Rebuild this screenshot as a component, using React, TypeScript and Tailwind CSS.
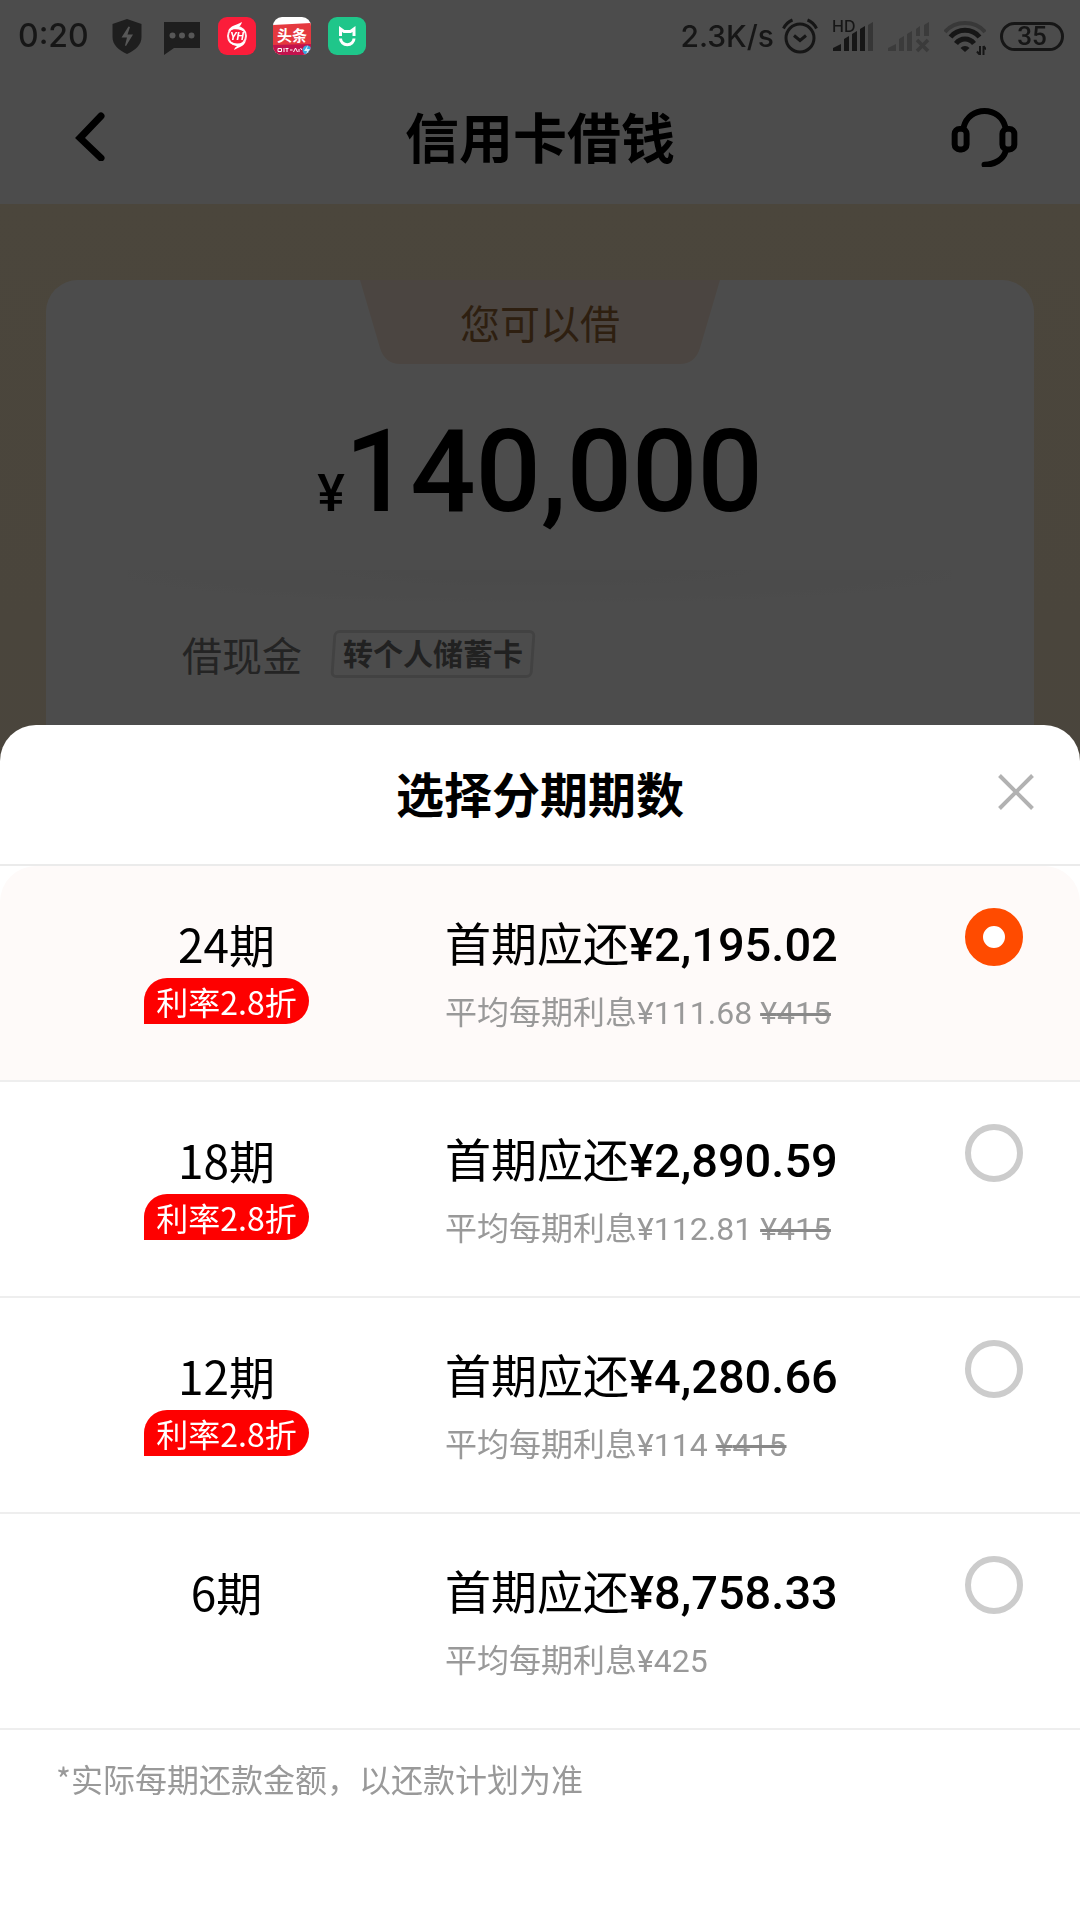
import { useState } from 'react'
import clsx from 'clsx'

type Plan = {
  periods: number
  discount?: string
  first: string
  interest: string
  original?: string
}

const PLANS: Plan[] = [
  { periods: 24, discount: '利率2.8折', first: '2,195.02', interest: '111.68', original: '415' },
  { periods: 18, discount: '利率2.8折', first: '2,890.59', interest: '112.81', original: '415' },
  { periods: 12, discount: '利率2.8折', first: '4,280.66', interest: '114', original: '415' },
  { periods: 6, first: '8,758.33', interest: '425' },
]

function ShieldIcon() {
  return (
    <svg viewBox="0 0 38 38" className="h-[38px] w-[38px]" aria-hidden="true">
      <path d="M19 2l14.500 5v13c0 8-6 13-14.500 17C10.500 33 4.500 28 4.500 20V7z" fill="#1e1e1e" />
      <path d="M20.500 9.500l-7 11h5.500l-2 8 1 .5 7-11.500h-5.500l2.500-7.500z" fill="#575757" />
    </svg>
  )
}

function MessageIcon() {
  return (
    <svg viewBox="0 0 38 38" className="h-[38px] w-[38px]" aria-hidden="true">
      <path d="M1 5h36v26H11l-10 7z" fill="#1e1e1e" />
      <circle cx="9.500" cy="18.500" r="3" fill="#575757" />
      <circle cx="19" cy="18.500" r="3" fill="#575757" />
      <circle cx="28.500" cy="18.500" r="3" fill="#575757" />
    </svg>
  )
}

function YhIcon() {
  return (
    <svg viewBox="0 0 38 38" className="h-[38px] w-[38px]" aria-hidden="true">
      <rect width="38" height="38" rx="9" fill="#fb1d3a" />
      <circle cx="19" cy="19" r="9" fill="none" stroke="#ffe9ec" strokeWidth="2" />
      <path d="M10 14c3-6 7-5 14-9-1 3-2 4-3 5 4 1 6 3 7 6-5-4-11-5-18-2z" fill="#fff" />
      <path d="M28 24c-3 6-5 5-12 9 1-3 2-3 3-4-4-1-8-3-9-6 5 4 11 5 18 1z" fill="#fff" />
      <text x="19" y="23" textAnchor="middle" fontSize="11" fontWeight="700" fontStyle="italic" fontFamily="Roboto, sans-serif" fill="#fff">
        YH
      </text>
    </svg>
  )
}

function ToutiaoIcon() {
  return (
    <svg viewBox="0 0 38 38" className="h-[38px] w-[38px]" aria-hidden="true">
      <defs>
        <clipPath id="toutiao">
          <rect width="38" height="38" rx="9" />
        </clipPath>
      </defs>
      <g clipPath="url(#toutiao)">
        <rect width="38" height="38" fill="#fff" />
        <path d="M0 8l38-2v32H0z" fill="#e5393f" />
        <path d="M0 28l38-1v11H0z" fill="#c2134d" />
        <text x="19" y="24" textAnchor="middle" fontSize="15" fontWeight="700" fontFamily="Noto Sans CJK SC, sans-serif" fill="#fff">
          头条
        </text>
        <path
          d="M5 31.500h3.500v3H5zM11 31v4M12.500 31.500h3M14 31v4M17 33h2.500M22.500 31l-2 4M22.500 31l2 4M26 32v3M27.500 31l1.500 2"
          stroke="#fff"
          strokeWidth="1"
          fill="none"
        />
        <circle cx="34" cy="33" r="4.500" fill="#39a9e0" />
        <path d="M35 28l-4 6h3l-1 4 4-6h-3z" fill="#d9f1fb" />
      </g>
    </svg>
  )
}

function MiHomeIcon() {
  return (
    <svg viewBox="0 0 38 38" className="h-[38px] w-[38px]" aria-hidden="true">
      <rect width="38" height="38" rx="9" fill="#1fc68a" />
      <path
        d="M12.500 19V12l3.500 2.500h6.500L26 12v7M12.500 21.500a6.500 6 0 0 0 13.500 0"
        fill="none"
        stroke="#fff"
        strokeWidth="3"
      />
    </svg>
  )
}

function AlarmIcon() {
  return (
    <svg viewBox="0 0 36 38" className="h-[38px] w-9" aria-hidden="true" fill="none" stroke="#161616" strokeWidth="3">
      <circle cx="18" cy="21" r="14" />
      <path d="M12 18.500l6 5 6-5M1.500 11.500c2-4 5-7 9-8.500M34.500 11.500c-2-4-5-7-9-8.500" />
    </svg>
  )
}

function SignalHdIcon() {
  return (
    <span className="relative block">
      <svg viewBox="0 0 42 38" className="h-[38px] w-[42px]" aria-hidden="true">
        <path d="M1 34v-3l8-4v7zM12 22l5-3v15h-5zM20 17l5-3v20h-5zM28 12l5-3v25h-5z" fill="#161616" />
        <path d="M36 8l5-3v29h-5z" fill="#363636" />
      </svg>
      <span className="absolute top-0 left-0 text-[16px] leading-[18px] font-medium">HD</span>
    </span>
  )
}

function SignalOffIcon() {
  return (
    <svg viewBox="0 0 42 38" className="h-[38px] w-[42px]" aria-hidden="true">
      <path d="M0 34v-3l8-4v7zM11 22l5-3v15h-5zM19 17l5-3v20h-5zM28 12l4-3v10h-4zM36 8l5-3v14h-5z" fill="#3b3b3b" />
      <path d="M29 23l11 11M40 23L29 34" stroke="#3b3b3b" strokeWidth="3.500" />
    </svg>
  )
}

function WifiIcon() {
  return (
    <svg viewBox="0 0 42 38" className="h-[38px] w-[42px]" aria-hidden="true" fill="none" strokeWidth="4">
      <path d="M1 15C11 3 31 3 41 15" stroke="#383838" />
      <path d="M6.500 20c7.500-9 21.500-9 29 0M12 26.500c4.500-6 13.500-6 18 0" stroke="#161616" strokeWidth="5" />
      <path d="M16.500 31a6 6 0 0 1 9 0l-4.500 4z" fill="#161616" />
      <path d="M36 29v9M39.500 29v9M33 34.500l3 3.500M39.500 29l2.500 3.500" stroke="#161616" strokeWidth="2" />
    </svg>
  )
}

function StatusBar() {
  return (
    <div className="fixed inset-x-0 top-0 z-20 flex h-[72px] items-center justify-between pr-4 pl-[18px] font-['Inter',sans-serif] text-[#161616]">
      <div className="flex items-center gap-[17px]">
        <span className="w-[73px] text-[32px] leading-9 font-medium">0:20</span>
        <ShieldIcon />
        <MessageIcon />
        <YhIcon />
        <ToutiaoIcon />
        <MiHomeIcon />
      </div>
      <div className="flex items-center gap-[14px]">
        <div className="flex items-center gap-2">
          <span className="text-[30px] leading-9 font-medium">2.3K/s</span>
          <AlarmIcon />
        </div>
        <SignalHdIcon />
        <SignalOffIcon />
        <WifiIcon />
        <span className="flex h-[29px] w-16 items-center justify-center rounded-full border-[3px] border-[#161616] font-['Roboto',sans-serif] text-[26px] leading-6 font-medium">
          35
        </span>
      </div>
    </div>
  )
}

function LoanPage() {
  return (
    <div className="flex min-h-screen flex-col bg-white">
      <header className="flex h-[204px] items-center justify-between px-[62px] pt-[68px]">
        <button type="button" aria-label="返回" className="flex w-[67px] justify-start pl-3">
          <svg viewBox="0 0 34 50" className="h-[50px] w-[34px]" fill="none" stroke="#000" strokeWidth="7" strokeLinecap="round">
            <path d="M27 5L6 27l21 20" />
          </svg>
        </button>
        <h1 className="text-[54px] leading-[72px] font-bold">信用卡借钱</h1>
        <button type="button" aria-label="客服" className="w-[67px]">
          <svg viewBox="91 48 202 184" className="h-[61px] w-[67px]" fill="none" stroke="#000" strokeWidth="18" strokeLinecap="round">
            <rect x="102" y="117" width="36" height="62" rx="15" />
            <rect x="246" y="117" width="36" height="62" rx="15" />
            <path d="M129 112c8-32 34-49 63-49s55 17 63 49M256 184c-8 26-34 41-64 41" />
          </svg>
        </button>
      </header>

      <main className="flex grow flex-col bg-linear-to-b from-[#fae9c8] to-[#f6e5d0] px-[46px] pt-[76px]">
        <section className="flex grow flex-col items-center rounded-t-[32px] bg-white">
          <div className="relative flex h-[84px] w-[360px] items-center justify-center">
            <svg viewBox="0 0 360 84" className="absolute inset-0 h-full w-full" aria-hidden="true">
              <path d="M0 0h360l-20 68q-5 16-20 16H40q-15 0-20-16z" fill="#fae8da" />
            </svg>
            <span className="relative text-[40px] leading-[60px] text-[#9a6a38]">您可以借</span>
          </div>
          <p className="mt-10 flex items-baseline font-['Roboto',sans-serif] leading-[136px] font-medium">
            <span className="text-[52px]">¥</span>
            <span className="text-[115px]">140,000</span>
          </p>
          <div className="mt-2 h-8 w-10/12 bg-radial-[at_50%_0%] from-[#f7f7f7] to-white" />
          <div className="mt-[22px] flex w-full items-center gap-[30px] pl-[136px]">
            <span className="text-[40px] leading-[60px] text-[#7a7a7a]">借现金</span>
            <span className="relative px-[11px]">
              <span className="absolute inset-0 -skew-x-4 rounded-md border-[3px] border-[#dedede]" />
              <span className="relative block pb-1 text-[30px] leading-[44px] font-bold text-[#707070]">转个人储蓄卡</span>
            </span>
          </div>
        </section>
      </main>
    </div>
  )
}

function PlanRow({ plan, checked, onSelect }: { plan: Plan; checked: boolean; onSelect: () => void }) {
  return (
    <label
      className={clsx(
        'flex h-[216px] cursor-pointer items-start border-b-2 border-[#eeeeee] pr-[57px] first-of-type:rounded-t-[36px]',
        checked ? 'bg-[#fefaf9]' : 'bg-white',
      )}
    >
      <span className="flex w-[43.5%] shrink-0 flex-col items-center pt-[42px] pl-2">
        <span className="text-[46px] leading-[70px]">{plan.periods}期</span>
        {plan.discount && (
          <span className="rounded-t-full rounded-br-full bg-[#fe0000] px-3 text-[32px] leading-[46px] text-white">
            {plan.discount}
          </span>
        )}
      </span>
      <span className="flex grow flex-col pt-[45px] font-['Roboto','Noto_Sans_CJK_SC',sans-serif]">
        <span className="text-[46px] leading-[68px]">
          首期应还<strong className="text-[47px] font-medium">¥{plan.first}</strong>
        </span>
        <span className="text-[32px] leading-[68px] text-[#999999]">
          平均每期利息¥{plan.interest}
          {plan.original && (
            <>
              {' '}
              <s className="decoration-[#888888] decoration-3">¥{plan.original}</s>
            </>
          )}
        </span>
      </span>
      <input
        type="radio"
        name="plan"
        checked={checked}
        onChange={onSelect}
        className="mt-[42px] h-[58px] w-[58px] shrink-0 appearance-none rounded-full border-[6px] border-[#cccccc] bg-white checked:border-[18px] checked:border-[#ff4b00]"
      />
    </label>
  )
}

export default function App() {
  const [periods, setPeriods] = useState(24)

  return (
    <div className="font-['Noto_Sans_CJK_SC',sans-serif] text-black">
      <LoanPage />
      <div className="fixed inset-0 z-10 flex flex-col justify-end bg-black/70">
        <div role="dialog" aria-label="选择分期期数" className="rounded-t-[36px] bg-white">
          <div className="flex h-[141px] items-center justify-between border-b-2 border-[#ebebeb] px-[46px] pb-[6px]">
            <span className="w-9" />
            <h2 className="text-[48px] leading-[72px] font-bold">选择分期期数</h2>
            <button type="button" aria-label="关闭" className="w-9">
              <svg viewBox="0 0 36 36" className="h-9 w-9" stroke="#b2b2b2" strokeWidth="4">
                <path d="M1.500 1.500l33 33M34.500 1.500l-33 33" />
              </svg>
            </button>
          </div>

          <div role="radiogroup" aria-label="分期期数">
            {PLANS.map((plan) => (
              <PlanRow
                key={plan.periods}
                plan={plan}
                checked={plan.periods === periods}
                onSelect={() => setPeriods(plan.periods)}
              />
            ))}
          </div>

          <p className="px-[56px] pt-6 pb-[118px] text-[32px] leading-[48px] text-[#999999]">
            *实际每期还款金额，以还款计划为准
          </p>
        </div>
      </div>
      <StatusBar />
    </div>
  )
}
